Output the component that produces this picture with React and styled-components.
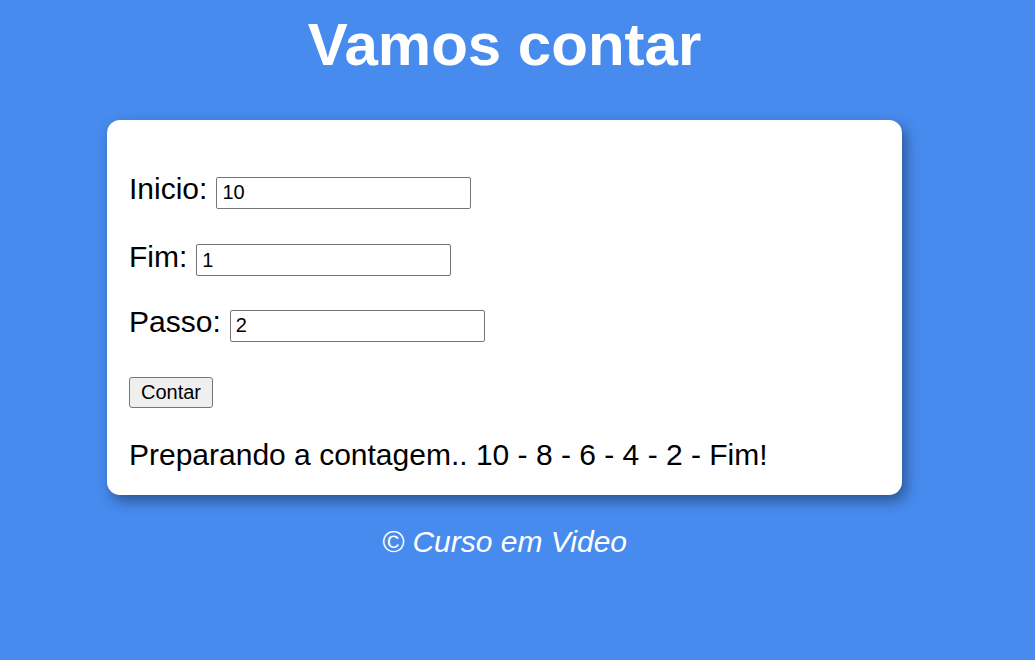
import React from 'react';
import styled, { createGlobalStyle } from 'styled-components';

const GlobalStyle = createGlobalStyle`
  html, body {
    margin: 0;
    padding: 0;
    background-color: #478bef;
  }
  body {
    font-family: "Liberation Sans", Arial, sans-serif;
    color: #000;
  }
`;

const Page = styled.div`
  width: 1009px;
  min-height: 660px;
  display: flex;
  flex-direction: column;
  align-items: center;
  padding-top: 10px;
  box-sizing: border-box;
`;

const Title = styled.h1`
  margin: 0;
  color: #fff;
  font-size: 60px;
  font-weight: bold;
  line-height: 69px;
  text-align: center;
`;

const Card = styled.section`
  margin-top: 41px;
  width: 795px;
  box-sizing: border-box;
  background-color: #fff;
  border-radius: 13px;
  padding: 53px 22px 24px;
  box-shadow: 4px 6px 14px rgba(0, 0, 0, 0.4);
  display: flex;
  flex-direction: column;
  align-items: flex-start;
`;

const Field = styled.div`
  display: flex;
  align-items: baseline;
  gap: 9px;
  margin-bottom: ${({ gap }) => gap}px;
`;

const Label = styled.label`
  font-size: 30px;
  line-height: 32px;
`;

const Input = styled.input`
  width: 255px;
  height: 32px;
  box-sizing: border-box;
  border: 1px solid #767676;
  border-radius: 2px;
  padding: 1px 5px;
  font-family: "Liberation Sans", Arial, sans-serif;
  font-size: 20px;
  color: #000;
  background: #fff;
`;

const Button = styled.button`
  height: 31px;
  width: 84px;
  box-sizing: border-box;
  border: 1px solid #767676;
  border-radius: 3px;
  background-color: #efefef;
  font-family: "Liberation Sans", Arial, sans-serif;
  font-size: 20px;
  color: #000;
  padding: 0;
`;

const Result = styled.p`
  margin: 31px 0 0;
  font-size: 30px;
  line-height: 32px;
`;

const Footer = styled.footer`
  margin-top: 30px;
  color: #fff;
  font-size: 30px;
  font-style: italic;
  line-height: 34px;
  text-align: center;
`;

const fields = [
  { id: 'inicio', label: 'Inicio:', value: '10', gap: 32 },
  { id: 'fim', label: 'Fim:', value: '1', gap: 30 },
  { id: 'passo', label: 'Passo:', value: '2', gap: 35 },
];

function App() {
  return (
    <Page>
      <GlobalStyle />
      <Title>Vamos contar</Title>
      <Card>
        {fields.map((f) => (
          <Field key={f.id} gap={f.gap}>
            <Label htmlFor={f.id}>{f.label}</Label>
            <Input id={f.id} type="number" defaultValue={f.value} />
          </Field>
        ))}
        <Button type="button">Contar</Button>
        <Result>Preparando a contagem.. 10 - 8 - 6 - 4 - 2 - Fim!</Result>
      </Card>
      <Footer>&copy; Curso em Video</Footer>
    </Page>
  );
}

export default App;
